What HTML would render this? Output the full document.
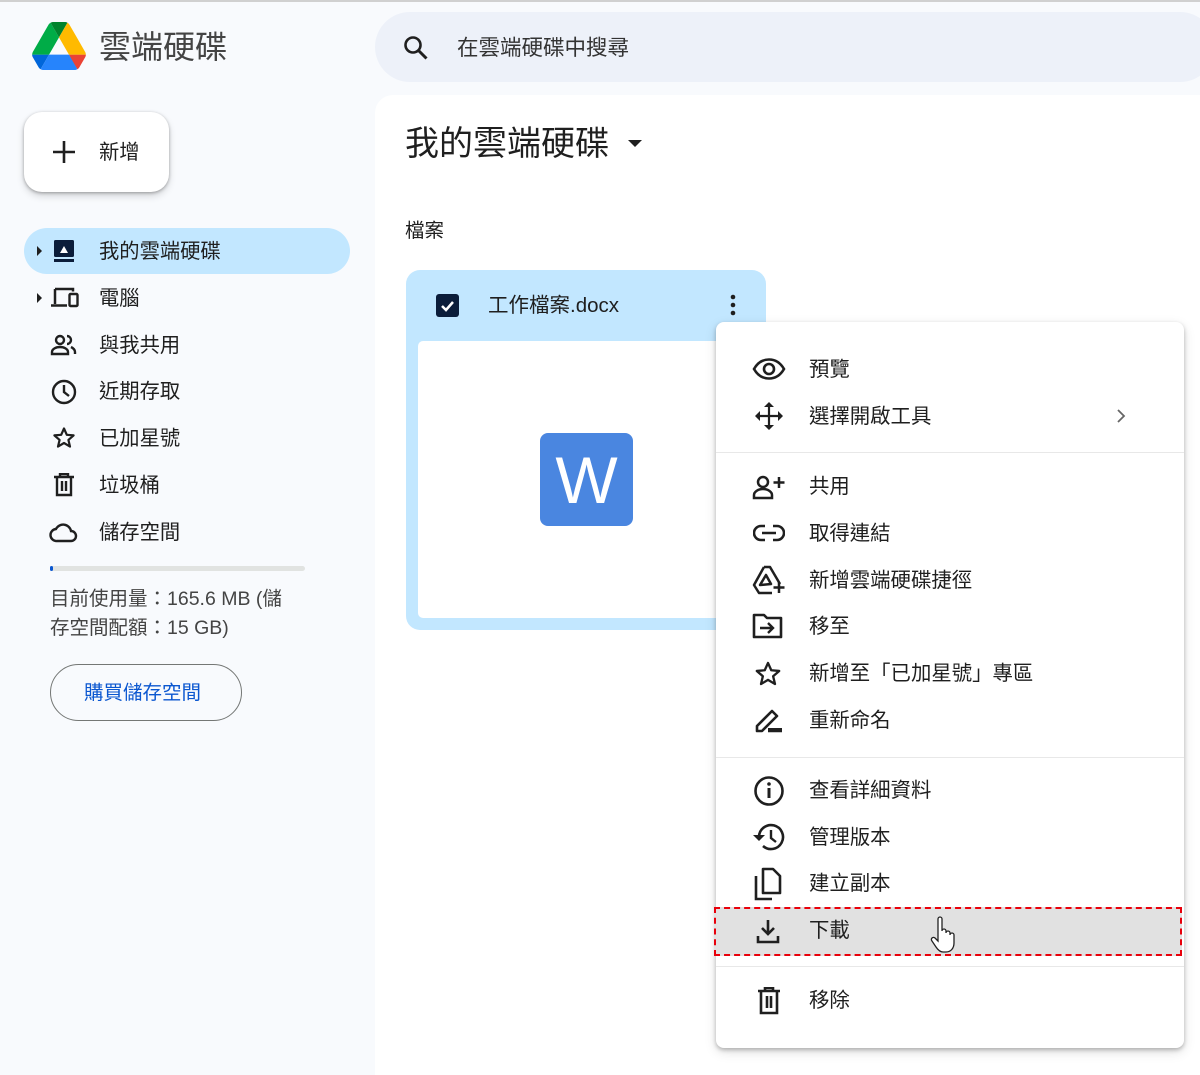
<!DOCTYPE html>
<html><head><meta charset="utf-8"><style>
*{margin:0;padding:0;box-sizing:border-box}
body{width:1200px;height:1056px;overflow:hidden;background:#f8fafd;font-family:"Liberation Sans","Noto Sans CJK TC",sans-serif;color:#1f1f1f;position:relative}
.a{position:absolute}
.t{position:absolute;white-space:nowrap;line-height:1}
.ic{position:absolute}
.side{font-size:20.3px;color:#1f1f1f}
.mi{font-size:20.4px;color:#1f1f1f}
</style></head><body>
<div class="a" style="left:0;top:0;width:1200px;height:2px;background:#d0d0d0"></div>
<svg class="ic" style="left:31px;top:22px" width="56" height="48" viewBox="0 0 87.3 78">
<path d="m6.6 66.85 3.85 6.65c.8 1.4 1.950 2.5 3.3 3.3l13.75-23.8h-27.5c0 1.55.4 3.1 1.2 4.5z" fill="#0066da"/>
<path d="m43.65 25-13.75-23.8c-1.35.8-2.5 1.9-3.3 3.3l-25.4 44a9.06 9.06 0 0 0 -1.2 4.5h27.5z" fill="#00ac47"/>
<path d="m73.55 76.8c1.35-.8 2.5-1.9 3.3-3.3l1.6-2.75 7.65-13.25c.8-1.4 1.2-2.95 1.2-4.5h-27.502l5.852 11.5z" fill="#ea4335"/>
<path d="m43.65 25 13.75-23.8c-1.35-.8-2.9-1.2-4.5-1.2h-18.5c-1.6 0-3.15.45-4.5 1.2z" fill="#00832d"/>
<path d="m59.8 53h-32.3l-13.75 23.8c1.35.8 2.9 1.2 4.5 1.2h50.8c1.6 0 3.150-.45 4.5-1.2z" fill="#2684fc"/>
<path d="m73.4 26.5-12.7-22c-.8-1.4-1.95-2.5-3.3-3.3l-13.75 23.8 16.15 28h27.45c0-1.55-.4-3.1-1.2-4.5z" fill="#ffba00"/>
</svg>
<div class="t" style="left:99px;top:31px;font-size:32px;color:#444">雲端硬碟</div>
<div class="a" style="left:24px;top:112px;width:145px;height:80px;background:#fff;border-radius:18px;box-shadow:0 1px 3px rgba(0,0,0,.3),0 4px 8px rgba(0,0,0,.15)"></div>
<svg class="ic" style="left:52px;top:140px" width="24" height="24"><path d="M12 1v22M1 12h22" stroke="#1f1f1f" stroke-width="2.6"/></svg>
<div class="t" style="left:99px;top:143px;font-size:20.3px">新增</div>
<div class="a" style="left:24px;top:228px;width:326px;height:46px;background:#c2e7ff;border-radius:23px"></div>
<svg class="ic" style="left:37px;top:246px" width="6" height="10"><path d="M0 0l5 5-5 5z" fill="#1f1f1f"/></svg>
<svg class="ic" style="left:37px;top:293px" width="6" height="10"><path d="M0 0l5 5-5 5z" fill="#1f1f1f"/></svg>
<svg class="ic" style="left:52px;top:239px" width="24" height="24" viewBox="0 0 24 24"><rect x="2" y="1" width="20" height="17" rx="1.5" fill="#0b1d3a"/><rect x="2" y="20" width="20" height="3" fill="#0b1d3a"/><path d="M8 14h8l-4-7z" fill="#fff"/></svg>
<svg class="ic" style="left:50px;top:286px" width="30" height="24" viewBox="0 0 30 24"><path d="M5 3h18v2.5M5 3v15M1 19.5h16" stroke="#1f1f1f" stroke-width="2.5" fill="none"/><rect x="19.5" y="8" width="8" height="12" rx="1" stroke="#1f1f1f" stroke-width="2.4" fill="none"/></svg>
<svg class="ic" style="left:50px;top:333px" width="28" height="24" viewBox="0 0 28 24"><circle cx="10" cy="7" r="4" stroke="#1f1f1f" stroke-width="2.4" fill="none"/><path d="M2 21v-2c0-3 4-5 8-5s8 2 8 5v2z" stroke="#1f1f1f" stroke-width="2.4" fill="none"/><path d="M17 3a4 4 0 0 1 0 8M21 14c2 1 4 2.5 4 5v2" stroke="#1f1f1f" stroke-width="2.4" fill="none"/></svg>
<svg class="ic" style="left:51px;top:379px" width="26" height="26" viewBox="0 0 26 26"><circle cx="13" cy="13" r="11" stroke="#1f1f1f" stroke-width="2.4" fill="none"/><path d="M13 6v7l5 4" stroke="#1f1f1f" stroke-width="2.4" fill="none"/></svg>
<svg class="ic" style="left:52px;top:426px" width="24" height="24" viewBox="0 0 24 24"><path d="M12 2.5l2.8 6.3 6.8.6-5.2 4.5 1.6 6.7L12 17l-6 3.6 1.6-6.7-5.2-4.5 6.8-.6z" stroke="#1f1f1f" stroke-width="2.2" fill="none" stroke-linejoin="round"/></svg>
<svg class="ic" style="left:53px;top:473px" width="22" height="24" viewBox="0 0 22 24"><path d="M1 4h20M7 4V1h8v3M4 4v18h14V4M9 8v10M13 8v10" stroke="#1f1f1f" stroke-width="2.4" fill="none"/></svg>
<svg class="ic" style="left:49px;top:521px" width="30" height="22" viewBox="0 0 30 22"><path d="M8 20a6 6 0 0 1-1-12 8 8 0 0 1 15 2 5 5 0 0 1 0 10z" stroke="#1f1f1f" stroke-width="2.4" fill="none"/></svg>
<div class="t side" style="left:99px;top:242px">我的雲端硬碟</div>
<div class="t side" style="left:99px;top:289px">電腦</div>
<div class="t side" style="left:99px;top:336px">與我共用</div>
<div class="t side" style="left:99px;top:382px">近期存取</div>
<div class="t side" style="left:99px;top:429px">已加星號</div>
<div class="t side" style="left:99px;top:476px">垃圾桶</div>
<div class="t side" style="left:99px;top:523px">儲存空間</div>
<div class="a" style="left:50px;top:566px;width:255px;height:5px;background:#e1e3e1;border-radius:3px"></div>
<div class="a" style="left:50px;top:566px;width:3px;height:5px;background:#0b57d0;border-radius:2px"></div>
<div class="t" style="left:50px;top:590px;font-size:19.5px;color:#444">目前使用量：165.6 MB (儲</div>
<div class="t" style="left:50px;top:619px;font-size:19.5px;color:#444">存空間配額：15 GB)</div>
<div class="a" style="left:50px;top:664px;width:192px;height:57px;border:1.5px solid #747775;border-radius:29px"></div>
<div class="t" style="left:84px;top:684px;font-size:19.5px;color:#0b57d0">購買儲存空間</div>
<div class="a" style="left:375px;top:12px;width:840px;height:70px;background:#edf1f9;border-radius:35px"></div>
<svg class="ic" style="left:402px;top:34px" width="28" height="28" viewBox="0 0 28 28"><circle cx="11" cy="11" r="7.5" stroke="#1f1f1f" stroke-width="2.6" fill="none"/><path d="M16.5 16.5l8 8" stroke="#1f1f1f" stroke-width="3"/></svg>
<div class="t" style="left:457px;top:38px;font-size:21.5px;color:#333">在雲端硬碟中搜尋</div>
<div class="a" style="left:375px;top:95px;width:840px;height:980px;background:#fff;border-radius:18px 0 0 0"></div>
<div class="t" style="left:405px;top:127px;font-size:34px">我的雲端硬碟</div>
<svg class="ic" style="left:628px;top:140px" width="14" height="8"><path d="M0 0h14L7 7z" fill="#1f1f1f"/></svg>
<div class="t" style="left:405px;top:222px;font-size:19.5px;color:#1f1f1f">檔案</div>
<div class="a" style="left:406px;top:270px;width:360px;height:360px;background:#c2e7ff;border-radius:14px"></div>
<div class="a" style="left:418px;top:341px;width:348px;height:277px;background:#fff;border-radius:5px"></div>
<div class="a" style="left:436px;top:294px;width:23px;height:23px;background:#0b1d3a;border-radius:3px"></div>
<svg class="ic" style="left:436px;top:294px" width="23" height="23"><path d="M6 12l4 4 7-8" stroke="#fff" stroke-width="2.5" fill="none"/></svg>
<div class="t" style="left:488px;top:296px;font-size:20.5px">工作檔案.docx</div>
<svg class="ic" style="left:729px;top:294px" width="8" height="24"><circle cx="4" cy="3" r="2.3" fill="#1f1f1f"/><circle cx="4" cy="11" r="2.3" fill="#1f1f1f"/><circle cx="4" cy="19" r="2.3" fill="#1f1f1f"/></svg>
<div class="a" style="left:540px;top:433px;width:93px;height:93px;background:#4a86e0;border-radius:8px"></div>
<div class="t" style="left:540px;top:447px;width:93px;text-align:center;font-size:66px;color:#fff">W</div>
<div class="a" style="left:716px;top:322px;width:468px;height:726px;background:#fff;border-radius:8px;box-shadow:0 2px 4px rgba(0,0,0,.25),0 4px 12px rgba(0,0,0,.12)"></div>
<div class="a" style="left:716px;top:452px;width:468px;height:1px;background:#e8e8e8"></div>
<div class="a" style="left:716px;top:757px;width:468px;height:1px;background:#e8e8e8"></div>
<div class="a" style="left:716px;top:966px;width:468px;height:1px;background:#e8e8e8"></div>
<div class="a" style="left:714px;top:907px;width:468px;height:49px;background:#e1e1e1;border:2.5px dashed #e8000b"></div>
<div class="t mi" style="left:809px;top:360px">預覽</div>
<div class="t mi" style="left:809px;top:407px">選擇開啟工具</div>
<svg class="ic" style="left:1116px;top:409px" width="10" height="14"><path d="M2 1l6 6-6 6" stroke="#666" stroke-width="1.8" fill="none"/></svg>
<div class="t mi" style="left:809px;top:477px">共用</div>
<div class="t mi" style="left:809px;top:524px">取得連結</div>
<div class="t mi" style="left:809px;top:571px">新增雲端硬碟捷徑</div>
<div class="t mi" style="left:809px;top:617px">移至</div>
<div class="t mi" style="left:809px;top:664px">新增至「已加星號」專區</div>
<div class="t mi" style="left:809px;top:711px">重新命名</div>
<div class="t mi" style="left:809px;top:781px">查看詳細資料</div>
<div class="t mi" style="left:809px;top:828px">管理版本</div>
<div class="t mi" style="left:809px;top:874px">建立副本</div>
<div class="t mi" style="left:809px;top:921px">下載</div>
<div class="t mi" style="left:809px;top:991px">移除</div>
<svg class="ic" style="left:752px;top:357px" width="34" height="24" viewBox="0 0 34 24"><path d="M2 12C6 5 11 2.5 17 2.5S28 5 32 12c-4 7-9 9.5-15 9.5S6 19 2 12z" stroke="#1f1f1f" stroke-width="2.6" fill="none"/><circle cx="17" cy="12" r="5" stroke="#1f1f1f" stroke-width="2.6" fill="none"/></svg>
<svg class="ic" style="left:753px;top:401px" width="32" height="30" viewBox="0 0 32 30"><path d="M16 4v22M5 15h22" stroke="#1f1f1f" stroke-width="2.2"/><path d="M11 6l5-5 5 5zM11 24l5 5 5-5zM7 10l-5 5 5 5zM25 10l5 5-5 5z" fill="#1f1f1f"/></svg>
<svg class="ic" style="left:752px;top:474px" width="34" height="26" viewBox="0 0 34 26"><circle cx="11" cy="8" r="5" stroke="#1f1f1f" stroke-width="2.5" fill="none"/><path d="M2 24v-3c0-3 4-6 9-6s9 3 9 6v3z" stroke="#1f1f1f" stroke-width="2.5" fill="none"/><path d="M27 3v11M21.5 8.5h11" stroke="#1f1f1f" stroke-width="2.5"/></svg>
<svg class="ic" style="left:753px;top:524px" width="32" height="18" viewBox="0 0 32 18"><path d="M12 2H8a7 7 0 0 0 0 14h4M20 2h4a7 7 0 0 1 0 14h-4M9 9h14" stroke="#1f1f1f" stroke-width="2.6" fill="none"/></svg>
<svg class="ic" style="left:752px;top:565px" width="34" height="30" viewBox="0 0 34 30"><path d="M12 2h6l10 17M12 2L2 20l5 8h13M8 20l6-10 5 9z" stroke="#1f1f1f" stroke-width="2.5" fill="none" stroke-linejoin="round"/><path d="M27 17v11M21.5 22.5h11" stroke="#1f1f1f" stroke-width="2.5"/></svg>
<svg class="ic" style="left:752px;top:613px" width="32" height="26" viewBox="0 0 32 26"><path d="M2 2h10l3 3h14v19H2z" stroke="#1f1f1f" stroke-width="2.6" fill="none" stroke-linejoin="round"/><path d="M8 15h12M16 10l5 5-5 5" stroke="#1f1f1f" stroke-width="2.4" fill="none"/></svg>
<svg class="ic" style="left:754px;top:660px" width="28" height="28" viewBox="0 0 24 24"><path d="M12 2.5l2.8 6.3 6.8.6-5.2 4.5 1.6 6.7L12 17l-6 3.6 1.6-6.7-5.2-4.5 6.8-.6z" stroke="#1f1f1f" stroke-width="2" fill="none" stroke-linejoin="round"/></svg>
<svg class="ic" style="left:754px;top:706px" width="30" height="28" viewBox="0 0 30 28"><path d="M3 25v-5L18 5l5 5L8 25zM14 25h14" stroke="#1f1f1f" stroke-width="2.6" fill="none" stroke-linejoin="round"/><path d="M14 22h14v4H14z" fill="#1f1f1f"/></svg>
<svg class="ic" style="left:753px;top:775px" width="32" height="32" viewBox="0 0 32 32"><circle cx="16" cy="16" r="13.5" stroke="#1f1f1f" stroke-width="2.6" fill="none"/><path d="M16 13v10" stroke="#1f1f1f" stroke-width="3"/><circle cx="16" cy="9" r="1.8" fill="#1f1f1f"/></svg>
<svg class="ic" style="left:752px;top:822px" width="34" height="30" viewBox="0 0 34 30"><path d="M7 15a12 12 0 1 1 4 9" stroke="#1f1f1f" stroke-width="2.6" fill="none"/><path d="M1 13l6 6 6-6z" fill="#1f1f1f"/><path d="M19 8v8l5 4" stroke="#1f1f1f" stroke-width="2.4" fill="none"/></svg>
<svg class="ic" style="left:753px;top:867px" width="30" height="34" viewBox="0 0 30 34"><path d="M10 2h10l7 7v17H10z" stroke="#1f1f1f" stroke-width="2.6" fill="none" stroke-linejoin="round"/><path d="M3 9v23h16" stroke="#1f1f1f" stroke-width="2.6" fill="none"/></svg>
<svg class="ic" style="left:756px;top:918px" width="24" height="26" viewBox="0 0 24 26"><path d="M12 2v14M6 10l6 6 6-6M2 18v6h20v-6" stroke="#1f1f1f" stroke-width="2.6" fill="none"/></svg>
<svg class="ic" style="left:757px;top:987px" width="24" height="28" viewBox="0 0 24 28"><path d="M1 4h22M8 4V1h8v3M4 4v22h16V4M10 9v12M14 9v12" stroke="#1f1f1f" stroke-width="2.6" fill="none"/></svg>
<svg class="ic" style="left:929px;top:916px" width="30" height="38" viewBox="0 0 30 38"><path d="M9 3a2 2 0 0 1 4 0v12a2 2 0 0 1 4 0v2a2 2 0 0 1 4 0v2a2 2 0 0 1 4 0v8c0 5-3 9-8 9h-3c-3 0-5-2-7-5l-4-6a2 2 0 0 1 3-3l3 3z" fill="#fff" stroke="#222" stroke-width="1.3"/></svg>
</body></html>
